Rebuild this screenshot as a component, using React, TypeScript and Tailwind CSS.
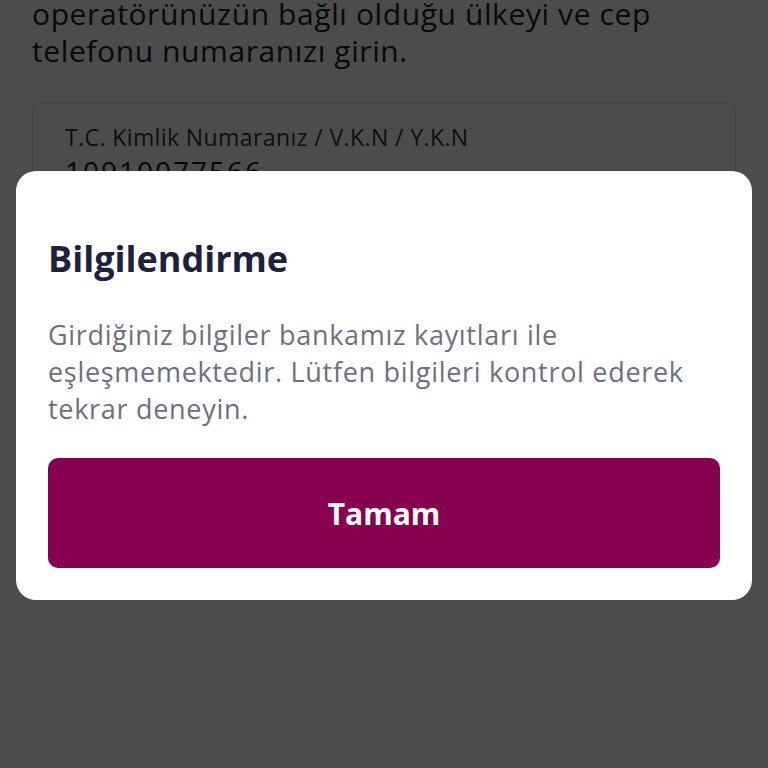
export default function App() {
  return (
    <div className="relative h-[768px] w-[768px] overflow-hidden bg-white font-['Open_Sans','Noto_Sans',sans-serif]">
      {/* page behind the dialog */}
      <div className="-mt-[5px] px-8">
        <p className="text-[30px] leading-[37px] tracking-[0.6px] text-[#222]">
          operatörünüzün bağlı olduğu ülkeyi ve cep
          <br />
          telefonu numaranızı girin.
        </p>
        <div className="mt-[34px] h-[150px] rounded-lg border border-[#e8e8e8] px-8 pt-[18px]">
          <div className="text-[23px] leading-[30px] tracking-[0.4px] text-[#333]">T.C. Kimlik Numaranız / V.K.N / Y.K.N</div>
          <div className="mt-[2px] text-[28px] leading-[34px] tracking-[2px] text-[#111]">10910077566</div>
        </div>
      </div>

      {/* overlay */}
      <div className="absolute inset-0 flex flex-col bg-black/[0.70] px-4 pt-[171px]">
        <div className="rounded-[20px] bg-white px-8 pb-8 pt-[68px]">
          <h2 className="text-[36px] font-bold leading-[40px] text-[#1c2140]">Bilgilendirme</h2>
          <p className="mt-[37px] text-[27px] leading-[37px] tracking-[0.7px] text-[#6c7080]">
            Girdiğiniz bilgiler bankamız kayıtları ile
            <br />
            eşleşmemektedir. Lütfen bilgileri kontrol ederek
            <br />
            tekrar deneyin.
          </p>
          <button className="mt-[31px] flex h-[110px] w-full items-center justify-center rounded-[10px] bg-[#880050] text-[30px] font-bold text-white">
            Tamam
          </button>
        </div>
      </div>
    </div>
  );
}
